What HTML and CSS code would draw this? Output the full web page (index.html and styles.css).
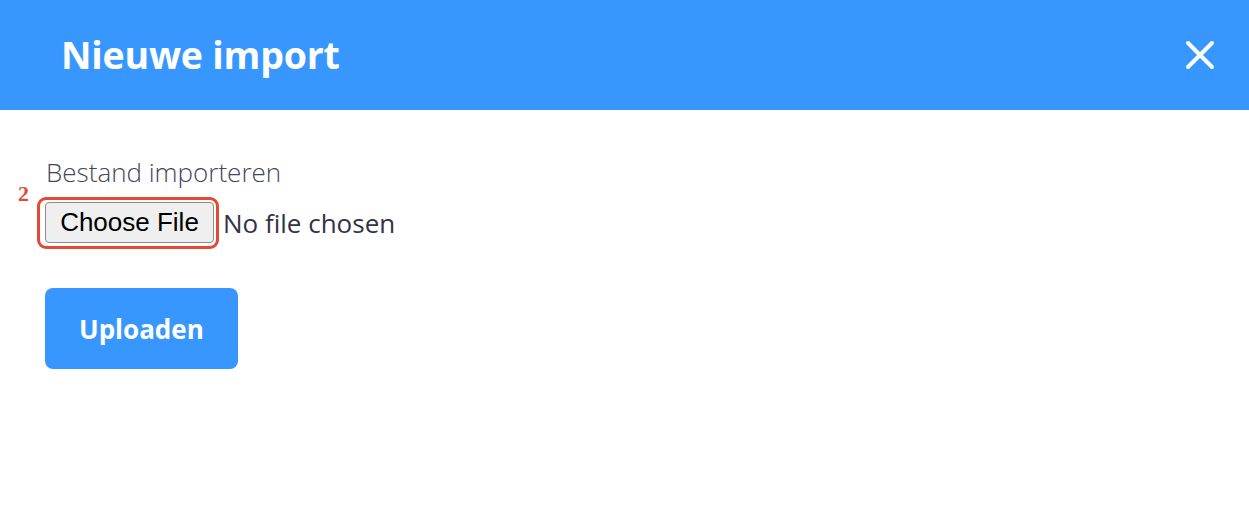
FILE: index.html
```html
<!DOCTYPE html>
<html lang="nl">
<head>
    <meta charset="UTF-8">
    <meta name="viewport" content="width=device-width, initial-scale=1.0">
    <title>Nieuwe import</title>
    <link rel="stylesheet" href="styles.css">
</head>
<body>
    <div class="modal">
        <!-- Header -->
        <header class="modal-header">
            <h1 class="modal-title">Nieuwe import</h1>
            <button class="modal-close" aria-label="Sluiten">
                <svg width="30" height="30" viewBox="0 0 30 30">
                    <path d="M3 3 L27 27 M27 3 L3 27" stroke="#fff" stroke-width="4" stroke-linecap="round" fill="none"/>
                </svg>
            </button>
        </header>

        <!-- Body -->
        <div class="modal-body">
            <label class="field-label" for="file">Bestand importeren</label>
            <div class="file-row">
                <span class="file-picker">
                    <span class="file-button">Choose File</span>
                    <span class="annotation"><span class="annotation-num">2</span></span>
                </span>
                <span class="file-name">No file chosen</span>
            </div>
            <button class="btn-primary">Uploaden</button>
        </div>
    </div>
</body>
</html>
```

FILE: styles.css
```css
/* Reset */
* {
    margin: 0;
    padding: 0;
    box-sizing: border-box;
}

body {
    font-family: 'Open Sans', 'Noto Sans', sans-serif;
    background-color: #fff;
    color: #333347;
}

/* Header */
.modal-header {
    height: 110px;
    background-color: #3797ff;
    display: flex;
    align-items: center;
    justify-content: space-between;
    padding: 0 34px 0 61px;
}

.modal-title {
    color: #fff;
    font-size: 37.5px;
    font-weight: 700;
    line-height: 1;
    letter-spacing: -0.2px;
}

.modal-close {
    background: none;
    border: none;
    width: 30px;
    height: 30px;
    display: flex;
    cursor: pointer;
}

/* Body */
.modal-body {
    padding: 45px 45px;
}

.field-label {
    display: block;
    font-size: 26px;
    font-weight: 300;
    line-height: 34px;
    color: #46465a;
    margin-left: 1px;
    margin-bottom: 13px;
}

.file-row {
    display: flex;
    align-items: center;
    gap: 9px;
    margin-bottom: 45px;
}

.file-picker {
    position: relative;
    display: inline-flex;
}

.file-button {
    display: inline-flex;
    align-items: center;
    justify-content: center;
    width: 169px;
    height: 41px;
    font-family: 'Liberation Sans', Arial, sans-serif;
    font-size: 26px;
    color: #000;
    background-color: #efefef;
    border: 1px solid #8b8b8b;
    border-radius: 4px;
}

.file-name {
    font-size: 26px;
    color: #333347;
}

/* Red annotation drawn over the button */
.annotation {
    position: absolute;
    top: -5px;
    left: -8px;
    right: -5px;
    bottom: -6px;
    border: 3.5px solid #e14b36;
    border-radius: 9px;
}

.annotation-num {
    position: absolute;
    left: -22px;
    top: -17px;
    font-family: 'Liberation Serif', serif;
    font-weight: 700;
    font-size: 22px;
    line-height: 1;
    color: #e14b36;
}

/* Primary button */
.btn-primary {
    height: 81px;
    padding: 0 34px;
    background-color: #3797ff;
    border: none;
    border-radius: 8px;
    color: #fff;
    font-family: inherit;
    font-size: 26px;
    font-weight: 700;
    cursor: pointer;
}
```
